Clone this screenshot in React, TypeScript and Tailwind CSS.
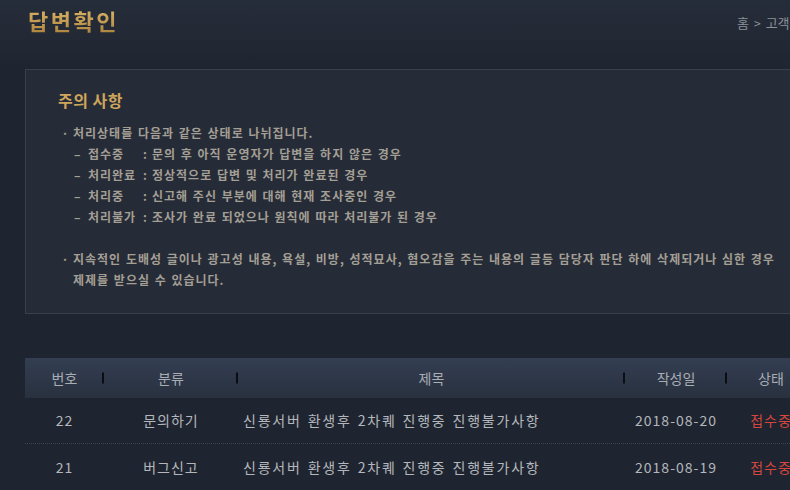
const notices = [
  { label: "접수중", text: "문의 후 아직 운영자가 답변을 하지 않은 경우" },
  { label: "처리완료", text: "정상적으로 답변 및 처리가 완료된 경우" },
  { label: "처리중", text: "신고해 주신 부분에 대해 현재 조사중인 경우" },
  { label: "처리불가", text: "조사가 완료 되었으나 원칙에 따라 처리불가 된 경우" },
];

const rows = [
  { no: 22, cat: "문의하기", title: "신룡서버 환생후 2차퀘 진행중 진행불가사항", date: "2018-08-20", status: "접수중" },
  { no: 21, cat: "버그신고", title: "신룡서버 환생후 2차퀘 진행중 진행불가사항", date: "2018-08-19", status: "접수중" },
];

function Sep() {
  return <span className="absolute right-0 top-1/2 -translate-y-1/2 h-[11px] w-[2px] bg-[#0b0d12]" />;
}

export default function App() {
  return (
    <div
      className="w-[790px] h-[490px] overflow-hidden bg-[#1f2530] text-[#a5a8ad]"
      style={{ fontFamily: '"Noto Sans CJK KR", "Noto Sans", sans-serif' }}
    >
      <div className="w-[830px]">
        {/* header */}
        <div className="h-[69px] bg-gradient-to-b from-[#262d3a] to-[#1f2530] flex items-start pl-[28px]">
          <h1 className="mt-[4px] text-[22px] font-bold tracking-[2.5px] leading-[32px] bg-gradient-to-b from-[#e3bd6e] to-[#a9803a] bg-clip-text text-transparent">
            답변확인
          </h1>
          <div className="ml-auto mr-[-2px] w-[95px] mt-[13px] text-[13px] text-[#8b9099] flex items-center gap-[5px] whitespace-nowrap">
            <span>홈</span>
            <span className="text-[12px]">&gt;</span>
            <span>고객</span>
          </div>
        </div>

        {/* notice */}
        <div className="ml-[25px] h-[245px] border border-[#3a404b] bg-[#262c37] pl-[32px] pt-[18px]">
          <h2 className="text-[16px] font-bold tracking-[0.5px] text-[#cfa55c] leading-[24px]">주의 사항</h2>
          <div className="mt-[10px] text-[12px] font-bold leading-[21px] tracking-[1px] [word-spacing:1px] text-[#a49f95]">
            <p className="flex">
              <span className="w-[15px] text-center">·</span>
              <span>처리상태를 다음과 같은 상태로 나뉘집니다.</span>
            </p>
            {notices.map((n) => (
              <p key={n.label} className="flex pl-[16px]">
                <span className="w-[14px]">–</span>
                <span className="w-[55px]">{n.label}</span>
                <span className="w-[9px]">:</span>
                <span>{n.text}</span>
              </p>
            ))}
            <div className="h-[21px]" />
            <p className="flex">
              <span className="w-[15px] text-center shrink-0">·</span>
              <span className="w-[740px]">
                지속적인 도배성 글이나 광고성 내용, 욕설, 비방, 성적묘사, 혐오감을 주는 내용의 글등 담당자 판단 하에 삭제되거나 심한 경우
                <br />
                제제를 받으실 수 있습니다.
              </span>
            </p>
          </div>
        </div>

        {/* table */}
        <div className="ml-[25px] mt-[44px] text-[14px]">
          <div className="flex h-[40px] items-center bg-gradient-to-b from-[#333e52] to-[#29313f] text-[#a9adb4]">
            <div className="relative w-[79px] text-center">번호<Sep /></div>
            <div className="relative w-[134px] text-center">분류<Sep /></div>
            <div className="relative w-[387px] text-center">제목<Sep /></div>
            <div className="relative w-[102px] text-center">작성일<Sep /></div>
            <div className="w-[88px] text-center">상태</div>
          </div>
          {rows.map((r, i) => (
            <div
              key={r.no}
              className={
                "flex h-[46px] items-center text-[#b4b7bc] tracking-[1px] " +
                (i === 0 ? "border-b border-dotted border-[#3d4553]" : "")
              }
            >
              <div className="w-[79px] text-center">{r.no}</div>
              <div className="w-[134px] text-center">{r.cat}</div>
              <div className="w-[387px] pl-[5px] tracking-[1.8px] [word-spacing:1px]">{r.title}</div>
              <div className="w-[102px] text-center">{r.date}</div>
              <div className="w-[88px] text-center text-[#d4463f]">{r.status}</div>
            </div>
          ))}
        </div>
      </div>
    </div>
  );
}
